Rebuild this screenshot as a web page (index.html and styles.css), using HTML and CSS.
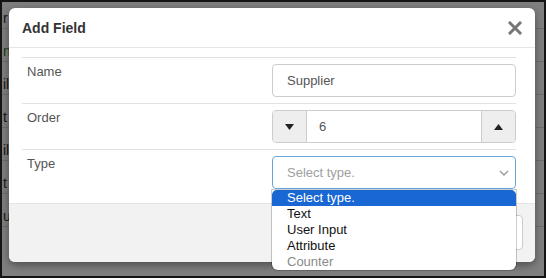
FILE: index.html
```html
<!DOCTYPE html>
<html lang="en">
<head>
  <meta charset="UTF-8">
  <title>Add Field</title>
  <link rel="stylesheet" href="styles.css">
</head>
<body>

  <div id="screen">

    <div id="page">
      <span class="peek">r</span>
      <span class="peek green">n</span>
      <span class="peek">il</span>
      <span class="peek">t</span>
      <span class="peek">il</span>
      <span class="peek">t</span>
      <span class="peek">u</span>
    </div>

    <div id="backdrop"></div>

    <div id="modal">
      <div id="modalHeader">
        <h4>Add Field</h4>
        <span class="close">
          <svg width="14" height="14" viewBox="0 0 14 14">
            <path d="M2 2 L12 12 M12 2 L2 12" stroke="#767676" stroke-width="3" stroke-linecap="square"/>
          </svg>
        </span>
      </div>

      <div id="modalBody">
        <div class="row">
          <label>Name</label>
          <div class="field">
            <input class="textbox" type="text" value="Supplier">
          </div>
        </div>

        <div class="row">
          <label>Order</label>
          <div class="field">
            <div class="spinner">
              <span class="spinBtn left">
                <svg width="9" height="6" viewBox="0 0 9 6"><path d="M0 0 H9 L4.5 6 Z" fill="#222"/></svg>
              </span>
              <span class="spinValue">6</span>
              <span class="spinBtn right">
                <svg width="9" height="6" viewBox="0 0 9 6"><path d="M0 6 H9 L4.5 0 Z" fill="#222"/></svg>
              </span>
            </div>
          </div>
        </div>

        <div class="row">
          <label>Type</label>
          <div class="field">
            <div class="select">
              <span>Select type.</span>
              <svg width="10" height="6" viewBox="0 0 10 6">
                <path d="M1 1 L5 5 L9 1" fill="none" stroke="#9a9a9a" stroke-width="1.4"/>
              </svg>
            </div>
          </div>
        </div>
      </div>

      <div id="modalFooter">
        <button class="btn">Close</button>
      </div>
    </div>

    <ul id="dropdown">
      <li class="active">Select type.</li>
      <li>Text</li>
      <li>User Input</li>
      <li>Attribute</li>
      <li class="disabled">Counter</li>
    </ul>

  </div>

</body>
</html>
```

FILE: styles.css
```css
body {
  margin: 0;
  padding: 0;
  background-color: #ffffff;
  font-family: "Liberation Sans", Arial, sans-serif;
}

#screen {
  position: relative;
  width: 546px;
  height: 278px;
  box-sizing: border-box;
  border: 2px solid #141414;
  overflow: hidden;
  background-color: #ffffff;
}

#page {
  display: flex;
  flex-direction: column;
  padding-top: 8px;
  gap: 14px;
}

.peek {
  display: block;
  padding-left: 1px;
  font-size: 14px;
  color: #333;
  border-bottom: 1px solid #ddd;
  padding-bottom: 2px;
}

.peek.green {
  color: #2e7d32;
}

#backdrop {
  position: absolute;
  top: 0;
  left: 0;
  right: 0;
  bottom: 0;
  background-color: rgba(0, 0, 0, 0.5);
}

#modal {
  position: absolute;
  top: 6px;
  left: 7px;
  width: 526px;
  height: 254px;
  background-color: #ffffff;
  border-radius: 6px;
  overflow: hidden;
  box-shadow: 0 3px 9px rgba(0, 0, 0, 0.4);
  display: flex;
  flex-direction: column;
}

#modalHeader {
  height: 39px;
  border-bottom: 1px solid #e5e5e5;
  display: flex;
  align-items: center;
  justify-content: space-between;
  padding: 0 12px 0 13px;
}

#modalHeader h4 {
  margin: 0;
  font-size: 14px;
  font-weight: bold;
  color: #333;
}

.close {
  display: flex;
  width: 16px;
  height: 16px;
  align-items: center;
  justify-content: center;
}

#modalBody {
  padding: 9px 19px 8px 13px;
}

.row {
  display: flex;
  border-top: 1px solid #e2e2e2;
  padding: 6px 0;
}

.row label {
  flex: 1;
  padding: 0 0 0 5px;
  font-size: 13px;
  color: #555;
}

.field {
  width: 244px;
}

.textbox {
  width: 100%;
  height: 33px;
  box-sizing: border-box;
  border: 1px solid #cccccc;
  border-radius: 4px;
  padding: 0 14px;
  font-family: "Liberation Sans", Arial, sans-serif;
  font-size: 13px;
  color: #555;
}

.spinner {
  display: flex;
  height: 33px;
  box-sizing: border-box;
  border: 1px solid #cccccc;
  border-radius: 4px;
  overflow: hidden;
}

.spinBtn {
  width: 33px;
  background-color: #eeeeee;
  display: flex;
  align-items: center;
  justify-content: center;
}

.spinBtn.left {
  border-right: 1px solid #cccccc;
}

.spinBtn.right {
  border-left: 1px solid #cccccc;
}

.spinValue {
  flex: 1;
  padding-left: 12px;
  display: flex;
  align-items: center;
  font-size: 13px;
  color: #555;
}

.select {
  height: 33px;
  box-sizing: border-box;
  border: 1px solid #66a6dc;
  border-radius: 4px;
  display: flex;
  align-items: center;
  justify-content: space-between;
  padding: 0 6px 0 14px;
  font-size: 13px;
  color: #a0a0a0;
}

#modalFooter {
  flex: 1;
  border-top: 1px solid #e5e5e5;
  background-color: #f2f2f2;
  display: flex;
  justify-content: flex-end;
  align-items: flex-start;
  padding: 11px 12px 0 0;
}

.btn {
  height: 35px;
  width: 70px;
  background-color: #ffffff;
  border: 1px solid #cccccc;
  border-radius: 4px;
  font-family: "Liberation Sans", Arial, sans-serif;
  font-size: 13px;
  color: #333;
}

#dropdown {
  position: absolute;
  top: 188px;
  left: 270px;
  width: 244px;
  margin: 0;
  padding: 0;
  list-style-type: none;
  background-color: #ffffff;
  border-radius: 0 0 6px 6px;
  overflow: hidden;
  box-shadow: 0 0 0 1px rgba(0, 0, 0, 0.2);
}

#dropdown li {
  height: 16px;
  line-height: 16px;
  padding-left: 15px;
  font-size: 13px;
  color: #111;
}

#dropdown li.active {
  background-color: #1967d2;
  color: #ffffff;
  border-radius: 5px 5px 0 0;
}

#dropdown li.disabled {
  color: #8a8a8a;
}
```
